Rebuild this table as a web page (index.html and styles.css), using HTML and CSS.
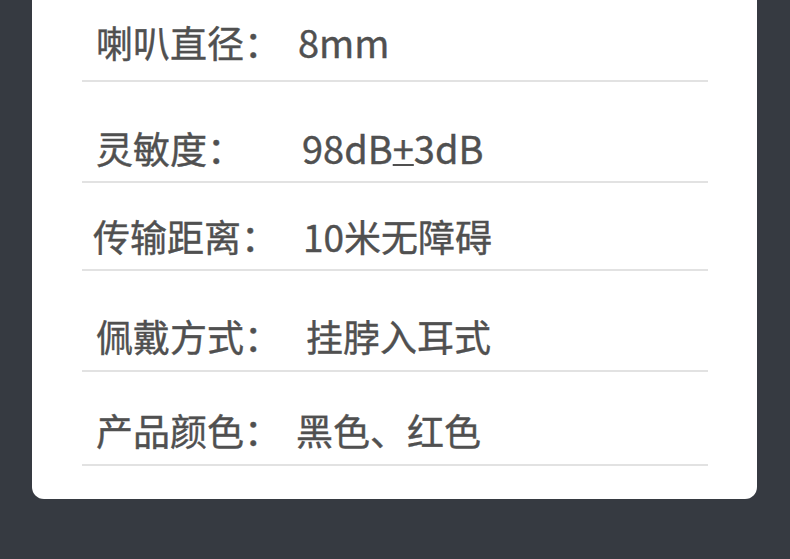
FILE: index.html
```html
<!DOCTYPE html>
<html lang="zh-CN">
<head>
<meta charset="utf-8">
<title>参数</title>
<link rel="stylesheet" href="styles.css">
</head>
<body>
<div class="page">
  <div class="card">
    <div class="row r1"><span class="label">喇叭直径：</span><span class="value v1">8mm</span></div>
    <div class="row r2"><span class="label">灵敏度：</span><span class="value v2">98dB<span class="pm">+</span>3dB</span></div>
    <div class="row r3"><span class="label l3">传输距离：</span><span class="value v3">10米无障碍</span></div>
    <div class="row r4"><span class="label">佩戴方式：</span><span class="value v4">挂脖入耳式</span></div>
    <div class="row r5"><span class="label">产品颜色：</span><span class="value v5">黑色、红色</span></div>
  </div>
</div>
</body>
</html>
```
FILE: styles.css
```css
html, body {
  margin: 0;
  padding: 0;
  background: #363a41;
}
.page {
  width: 790px;
  height: 559px;
  overflow: hidden;
}
.card {
  margin-left: 32px;
  width: 725px;
  height: 499px;
  background: #ffffff;
  border-radius: 0 0 12px 12px;
  padding: 0 49px 0 50px;
  box-sizing: border-box;
}
.row {
  display: flex;
  align-items: flex-end;
  box-sizing: border-box;
  border-bottom: 2px solid #e2e2e2;
  font-family: "Noto Sans CJK SC", "Noto Sans", sans-serif;
  font-weight: 400;
  font-size: 37px;
  line-height: 40px;
  color: #505050;
  -webkit-text-stroke: 0.4px #505050;
}
.r1 { height: 82px; padding-bottom: 18px; }
.r2 { height: 101px; padding-bottom: 13px; }
.r3 { height: 88px; padding-bottom: 13px; }
.r4 { height: 101px; padding-bottom: 14px; }
.r5 { height: 94px; padding-bottom: 14px; }
.label {
  width: 216px;
  padding-left: 14px;
  box-sizing: border-box;
  flex: none;
  white-space: nowrap;
}
.l3 { padding-left: 11px; }
.value {
  white-space: nowrap;
  font-size: 38px;
}
.pm {
  font-size: 38px;
  text-decoration: underline;
  text-decoration-thickness: 2px;
  text-underline-offset: 0px;
}
.v2 { padding-left: 4px; }
.v3 { padding-left: 5px; font-size: 37px; }
.v4 { padding-left: 8px; font-size: 37px; }
.v5 { padding-left: 0; margin-left: -2px; font-size: 37px; }
```
